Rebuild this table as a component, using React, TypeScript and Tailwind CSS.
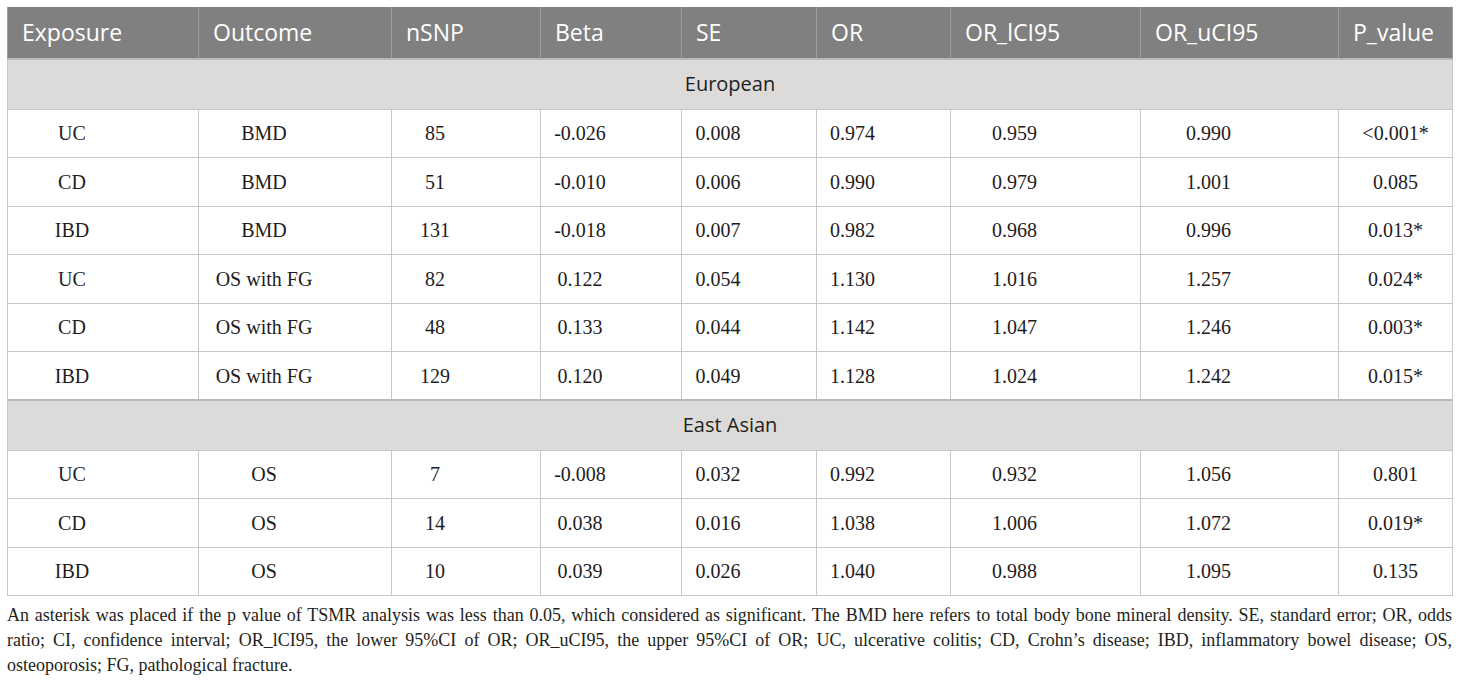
const headers = ["Exposure", "Outcome", "nSNP", "Beta", "SE", "OR", "OR_lCI95", "OR_uCI95", "P_value"];
const widths = [191, 193, 149, 141, 135, 134, 190, 198, 114];

type Row = string[];

const european: Row[] = [
  ["UC", "BMD", "85", "-0.026", "0.008", "0.974", "0.959", "0.990", "<0.001*"],
  ["CD", "BMD", "51", "-0.010", "0.006", "0.990", "0.979", "1.001", "0.085"],
  ["IBD", "BMD", "131", "-0.018", "0.007", "0.982", "0.968", "0.996", "0.013*"],
  ["UC", "OS with FG", "82", "0.122", "0.054", "1.130", "1.016", "1.257", "0.024*"],
  ["CD", "OS with FG", "48", "0.133", "0.044", "1.142", "1.047", "1.246", "0.003*"],
  ["IBD", "OS with FG", "129", "0.120", "0.049", "1.128", "1.024", "1.242", "0.015*"],
];

const eastAsian: Row[] = [
  ["UC", "OS", "7", "-0.008", "0.032", "0.992", "0.932", "1.056", "0.801"],
  ["CD", "OS", "14", "0.038", "0.016", "1.038", "1.006", "1.072", "0.019*"],
  ["IBD", "OS", "10", "0.039", "0.026", "1.040", "0.988", "1.095", "0.135"],
];

const sans = { fontFamily: '"Open Sans", "Noto Sans", sans-serif' };
const serif = { fontFamily: '"Liberation Serif", "Times New Roman", serif' };

function SectionRow({ label }: { label: string }) {
  return (
    <tr className="h-[50px] bg-[#dcdbd9]">
      <td
        colSpan={9}
        className="border-t-2 border-t-[#b9b9b9] border-x border-x-[#c8c8c8] text-center text-[20px] text-[#231f20]"
        style={sans}
      >
        {label}
      </td>
    </tr>
  );
}

function DataRow({ row }: { row: Row }) {
  return (
    <tr className="h-[48.5px]">
      {row.map((cell, i) => (
        <td
          key={i}
          className={`border border-[#c8c8c8] text-center text-[20px] text-[#1f1c1d] ${
            i === row.length - 1 ? "px-1" : "pr-[62px]"
          }`}
        >
          {cell}
        </td>
      ))}
    </tr>
  );
}

export default function App() {
  return (
    <div className="w-[1460px] h-[681px] bg-white pt-[7px] px-[7px]" style={serif}>
      <table className="w-[1445px] table-fixed border-collapse">
        <colgroup>
          {widths.map((w, i) => (
            <col key={i} style={{ width: w }} />
          ))}
        </colgroup>
        <thead>
          <tr className="h-[52px] bg-[#808080]">
            {headers.map(h => (
              <th
                key={h}
                className="border-x border-x-[#9c9c9c] pl-[14px] text-left font-normal text-[23px] text-white"
                style={sans}
              >
                {h}
              </th>
            ))}
          </tr>
        </thead>
        <tbody>
          <SectionRow label="European" />
          {european.map((r, i) => (
            <DataRow key={i} row={r} />
          ))}
          <SectionRow label="East Asian" />
          {eastAsian.map((r, i) => (
            <DataRow key={i} row={r} />
          ))}
        </tbody>
      </table>

      {/* 表注 */}
      <div className="w-[1445px] pt-[7px] text-[18px] leading-[25px] text-[#231f20]">
        <p className="text-justify [text-align-last:justify]">
          An asterisk was placed if the p value of TSMR analysis was less than 0.05, which considered as significant. The BMD here refers to total body bone mineral density. SE, standard error; OR, odds
        </p>
        <p className="text-justify [text-align-last:justify]">
          ratio; CI, confidence interval; OR_lCI95, the lower 95%CI of OR; OR_uCI95, the upper 95%CI of OR; UC, ulcerative colitis; CD, Crohn’s disease; IBD, inflammatory bowel disease; OS,
        </p>
        <p>osteoporosis; FG, pathological fracture.</p>
      </div>
    </div>
  );
}
